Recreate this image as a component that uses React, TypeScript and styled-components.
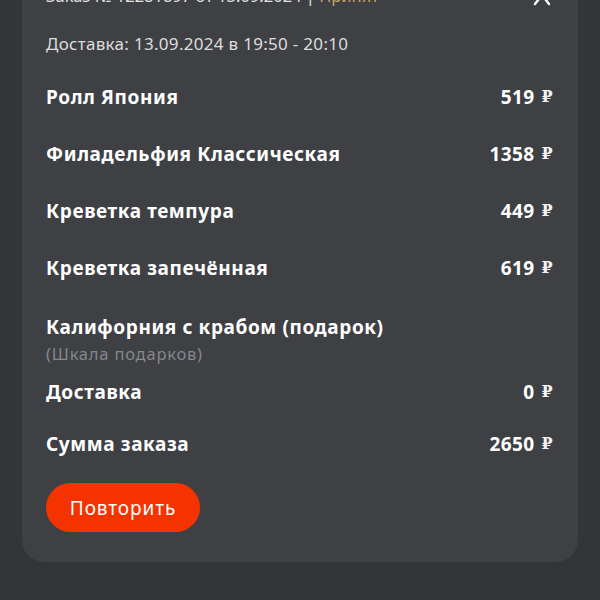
import React from "react";
import styled, { createGlobalStyle } from "styled-components";

const Global = createGlobalStyle`
  html, body { margin: 0; padding: 0; background: #343539; overflow: hidden; }
  body { font-family: "Noto Sans", "Open Sans", sans-serif; color: #fff; }
  * { box-sizing: border-box; }
`;

const Page = styled.div`
  width: 600px;
  height: 600px;
  background: #343539;
  padding: 0 22px;
  overflow: hidden;
`;

const Card = styled.div`
  margin-top: -40px;
  background: #3e4044;
  border-radius: 0 0 22px 22px;
  padding: 24px 25px 30px 24px;
  display: flex;
  flex-direction: column;
`;

const HeaderRow = styled.div`
  display: flex;
  align-items: center;
  justify-content: space-between;
  height: 24px;
`;

const HeaderText = styled.div`
  font-size: 16.5px;
  line-height: 24px;
  color: #e2e2e2;
`;

const Status = styled.span`
  color: #c9a067;
`;

const IconBtn = styled.div`
  width: 18px;
  height: 18px;
  margin-right: 2px;
  margin-top: 6px;
  display: flex;
`;

const DeliveryInfo = styled.div`
  margin-top: 24px;
  font-size: 17px;
  letter-spacing: 0.3px;
  line-height: 24px;
  color: #dcdcdc;
`;

const Row = styled.div<{ $mt: number }>`
  margin-top: ${(p) => p.$mt}px;
  display: flex;
  justify-content: space-between;
  align-items: center;
  height: 24px;
`;

const Name = styled.div`
  font-size: 19px;
  font-weight: 700;
  letter-spacing: 0.6px;
  line-height: 24px;
  color: #ffffff;
`;

const Price = styled.div`
  font-size: 19px;
  font-weight: 700;
  letter-spacing: 0.4px;
  line-height: 24px;
  color: #ffffff;
  display: flex;
  align-items: center;
  gap: 7px;
`;

const Ruble = styled.span`
  font-family: "DejaVu Serif", serif;
  font-weight: 700;
  font-size: 16px;
  color: #f2f2f2;
`;

const Sub = styled.div`
  margin-top: 5px;
  font-size: 16.5px;
  letter-spacing: 0.8px;
  line-height: 20px;
  color: #85878b;
`;

const Button = styled.button`
  margin-top: 27px;
  align-self: flex-start;
  width: 154px;
  height: 49px;
  border: none;
  border-radius: 25px;
  background: #f53300;
  color: #fff;
  font-family: "Noto Sans", sans-serif;
  font-size: 19px;
  letter-spacing: 0.9px;
  padding: 0;
  cursor: pointer;
`;

const items = [
  { name: "Ролл Япония", price: "519", mt: 29 },
  { name: "Филадельфия Классическая", price: "1358", mt: 33 },
  { name: "Креветка темпура", price: "449", mt: 33 },
  { name: "Креветка запечённая", price: "619", mt: 33 },
];

const PriceCell = ({ v }: { v: string }) => (
  <Price>
    {v}
    <Ruble>₽</Ruble>
  </Price>
);

export default function App() {
  return (
    <>
      <Global />
      <Page>
        <Card>
          <HeaderRow>
            <HeaderText>
              Заказ № 12281897 от 13.09.2024 | <Status>Принят</Status>
            </HeaderText>
            <IconBtn>
              <svg width="18" height="18" viewBox="0 0 18 18" fill="none">
                <path d="M2 14 L9 5 L16 14" stroke="#fff" strokeWidth="2.4" strokeLinecap="round" strokeLinejoin="round" />
              </svg>
            </IconBtn>
          </HeaderRow>
          <DeliveryInfo>Доставка: 13.09.2024 в 19:50 - 20:10</DeliveryInfo>
          {items.map((it) => (
            <Row key={it.name} $mt={it.mt}>
              <Name>{it.name}</Name>
              <PriceCell v={it.price} />
            </Row>
          ))}
          <Row $mt={35}>
            <Name>Калифорния с крабом (подарок)</Name>
          </Row>
          <Sub>(Шкала подарков)</Sub>
          <Row $mt={16}>
            <Name>Доставка</Name>
            <PriceCell v="0" />
          </Row>
          <Row $mt={28}>
            <Name>Сумма заказа</Name>
            <PriceCell v="2650" />
          </Row>
          <Button>Повторить</Button>
        </Card>
      </Page>
    </>
  );
}
